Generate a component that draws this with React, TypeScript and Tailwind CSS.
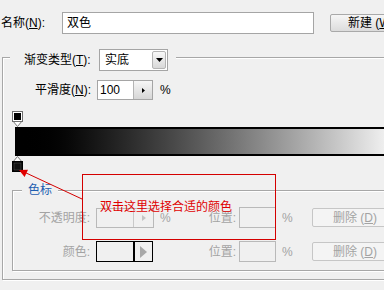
export default function App() {
  const inputBox = 'bg-white border border-[#a5a5a5]';
  const disabledBox = 'border border-[#b9b9b9]';

  const TopStop = () => (
    <svg width="11" height="16" viewBox="0 0 11 16" className="block ml-[9px] mt-[11px]">
      <polygon points="0.5,9.5 10.5,9.5 5.5,15.5" fill="#fff" stroke="#7a7a7a" />
      <rect x="0.5" y="0.5" width="10" height="10" fill="#fff" stroke="#6e6e6e" />
      <rect x="2" y="2" width="7" height="7" fill="#000" />
    </svg>
  );

  const BottomStop = () => (
    <svg width="11" height="16" viewBox="0 0 11 16" className="block ml-[9px]">
      <polygon points="5.5,0.5 10.5,6.5 0.5,6.5" fill="#fff" stroke="#7a7a7a" />
      <rect x="0.5" y="5.5" width="10" height="10" fill="#000" stroke="#000" />
      <rect x="2" y="7" width="7" height="7" fill="#111" stroke="#555" strokeWidth="0.5" />
    </svg>
  );

  const DeleteBtn = () => (
    <button className="shrink-0 w-[90px] h-[19px] text-left pl-[20px] bg-[#f4f4f4] border border-[#c6c6c6] rounded-[2px] text-[#a3a3a3]">
      删除 (<u>D</u>)
    </button>
  );

  return (
    <div className="relative w-[384px] h-[290px] overflow-hidden bg-[#f0f0f0] text-[12px] leading-none text-black font-['Liberation_Sans','Noto_Sans_CJK_SC',sans-serif]">
      {/* name row */}
      <div className="flex items-center pt-[12px]">
        <span className="shrink-0 w-[62px] pl-[1px]">名称(<u>N</u>):</span>
        <div className={`shrink-0 w-[252px] h-[22px] flex items-center pl-[4px] ${inputBox}`}>双色</div>
        <button className="shrink-0 ml-[16px] w-[72px] h-[18px] text-left pl-[17px] rounded-[2px] border border-[#a9a9a9] bg-gradient-to-b from-[#f6f6f6] to-[#dcdcdc]">
          新建 (<u>W</u>)
        </button>
      </div>

      {/* gradient group */}
      <div className="mt-[23px] ml-[2px] w-[420px] h-[223px] border border-[#a7a7a7] shadow-[inset_1px_1px_0_#fff,1px_1px_0_#fff]">
        <div className="-mt-[9px] ml-[7px] w-fit h-[22px] flex items-center bg-[#f0f0f0] pl-[14px] pr-[8px]">
          <span className="w-[75px]">渐变类型(<u>T</u>):</span>
          <div className={`w-[69px] h-[22px] flex items-center pl-[5px] ${inputBox}`}>
            实底
            <div className="ml-auto mr-[1px] w-[14px] h-[18px] flex items-center justify-center rounded-[2px] border border-[#b4b4b4] bg-gradient-to-b from-[#f8f8f8] to-[#d8d8d8]">
              <svg width="7" height="4" viewBox="0 0 7 4"><polygon points="0,0 7,0 3.5,4" fill="#000" /></svg>
            </div>
          </div>
        </div>

        <div className="mt-[9px] flex items-center pl-[32px] h-[20px]">
          <span className="w-[62px]">平滑度(<u>N</u>):</span>
          <div className={`w-[56px] h-[20px] flex ${inputBox}`}>
            <div className="w-[35px] flex items-center pl-[2px]">100</div>
            <div className="flex-1 flex items-center justify-center border-l border-[#b4b4b4] bg-gradient-to-b from-[#f6f6f6] to-[#d6d6d6]">
              <svg width="3" height="5" viewBox="0 0 3 5"><polygon points="0,0 3,2.5 0,5" fill="#000" /></svg>
            </div>
          </div>
          <span className="ml-[7px]">%</span>
        </div>

        <TopStop />
        <div className="ml-[12px] w-[390px] h-[29px] border-2 border-black bg-gradient-to-r from-black to-white" />
        <BottomStop />

        {/* color stop group */}
        <div className="mt-[18px] ml-[9px] w-[420px] h-[81px] border border-[#a7a7a7] shadow-[inset_1px_1px_0_#fff,1px_1px_0_#fff]">
          <div className="-mt-[8px] ml-[9px] w-fit h-[14px] px-[6px] flex items-center bg-[#f0f0f0] text-[#1e5eb0]">色标</div>

          <div className="mt-[10px] flex items-center h-[21px] text-[#a3a3a3]">
            <span className="shrink-0 w-[83px] text-right pr-[6px]">不透明度:</span>
            <div className={`shrink-0 w-[58px] h-[20px] flex ${disabledBox}`}>
              <div className="w-[36px]" />
              <div className="flex-1 flex items-center justify-center border-l border-[#c9c9c9]">
                <svg width="4" height="6" viewBox="0 0 4 6"><polygon points="0,0 4,3 0,6" fill="#c4c4c4" /></svg>
              </div>
            </div>
            <span className="shrink-0 w-[20px] pl-[6px]">%</span>
            <span className="shrink-0 w-[65px] text-right pr-[3px]">位置:</span>
            <div className={`shrink-0 w-[37px] h-[21px] ${disabledBox}`} />
            <span className="shrink-0 w-[36px] pl-[6px]">%</span>
            <DeleteBtn />
          </div>

          <div className="mt-[13px] flex items-center h-[21px] text-[#a3a3a3]">
            <span className="shrink-0 w-[83px] text-right pr-[6px]">颜色:</span>
            <div className="shrink-0 w-[38px] h-[21px] border border-black" />
            <div className="shrink-0 w-[19px] h-[21px] flex items-center justify-center border border-black">
              <svg width="7" height="12" viewBox="0 0 7 12"><polygon points="0,0 7,6 0,12" fill="#a8a8a8" /></svg>
            </div>
            <span className="shrink-0 w-[86px] text-right pr-[3px]">位置:</span>
            <div className={`shrink-0 w-[37px] h-[21px] ${disabledBox}`} />
            <span className="shrink-0 w-[36px] pl-[6px]">%</span>
            <DeleteBtn />
          </div>
        </div>
      </div>

      {/* annotation */}
      <svg width="100" height="210" viewBox="0 0 100 210" className="absolute left-0 top-0 pointer-events-none">
        <line x1="82" y1="199" x2="24" y2="172" stroke="#d40000" strokeWidth="1" />
        <polygon points="19,170 28,169.7 24.6,177" fill="#e00000" />
      </svg>
      <div className="absolute left-[82px] top-[174px] w-[194px] h-[66px] border border-[#d40000] flex items-center pl-[17px] text-[#e00000]">
        双击这里选择合适的颜色
      </div>
    </div>
  );
}
